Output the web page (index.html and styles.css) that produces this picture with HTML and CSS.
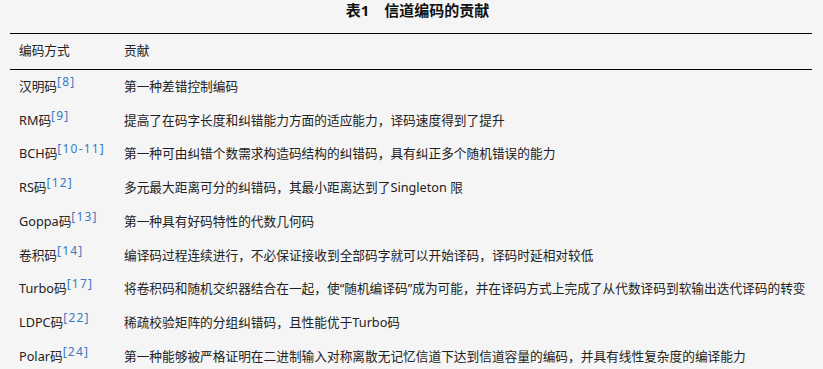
FILE: index.html
```html
<!DOCTYPE html>
<html lang="zh">
<head>
<meta charset="utf-8">
<link rel="stylesheet" href="styles.css">
</head>
<body>
<div class="page">
  <div class="title">表1　信道编码的贡献</div>
  <div class="table">
    <div class="row head"><div class="c1">编码方式</div><div class="c2">贡献</div></div>
    <div class="row"><div class="c1">汉明码<sup>[8]</sup></div><div class="c2">第一种差错控制编码</div></div>
    <div class="row"><div class="c1">RM码<sup>[9]</sup></div><div class="c2">提高了在码字长度和纠错能力方面的适应能力，译码速度得到了提升</div></div>
    <div class="row"><div class="c1">BCH码<sup>[10-11]</sup></div><div class="c2">第一种可由纠错个数需求构造码结构的纠错码，具有纠正多个随机错误的能力</div></div>
    <div class="row"><div class="c1">RS码<sup>[12]</sup></div><div class="c2">多元最大距离可分的纠错码，其最小距离达到了Singleton 限</div></div>
    <div class="row"><div class="c1">Goppa码<sup>[13]</sup></div><div class="c2">第一种具有好码特性的代数几何码</div></div>
    <div class="row"><div class="c1">卷积码<sup>[14]</sup></div><div class="c2">编译码过程连续进行，不必保证接收到全部码字就可以开始译码，译码时延相对较低</div></div>
    <div class="row"><div class="c1">Turbo码<sup>[17]</sup></div><div class="c2">将卷积码和随机交织器结合在一起，使“随机编译码”成为可能，并在译码方式上完成了从代数译码到软输出迭代译码的转变</div></div>
    <div class="row"><div class="c1">LDPC码<sup>[22]</sup></div><div class="c2">稀疏校验矩阵的分组纠错码，且性能优于Turbo码</div></div>
    <div class="row"><div class="c1">Polar码<sup>[24]</sup></div><div class="c2">第一种能够被严格证明在二进制输入对称离散无记忆信道下达到信道容量的编码，并具有线性复杂度的编译能力</div></div>
  </div>
</div>
</body>
</html>
```
FILE: styles.css
```css
html, body {
  margin: 0;
  padding: 0;
  background: #f5f5f5;
}
body {
  font-family: "Noto Sans", "Noto Sans CJK SC", sans-serif;
  color: #222;
  font-size: 12.7px;
}
.page {
  width: 823px;
  height: 369px;
  overflow: hidden;
  padding: 0 11px 0 10px;
  box-sizing: border-box;
}
.title {
  font-weight: bold;
  font-size: 15px;
  line-height: 20px;
  text-align: center;
  padding: 0 0 0 13px;
  height: 33px;
  color: #111;
}
.table {
  border-top: 1px solid #000;
}
.row {
  display: flex;
  padding: 8px 0;
  line-height: 17.75px;
  white-space: nowrap;
}
.row.head {
  padding: 8px 0 9px;
  border-bottom: 1px solid #000;
}
.c1 {
  width: 114px;
  padding-left: 9px;
  box-sizing: border-box;
  flex: none;
}
.c2 {
  flex: 1;
}
sup {
  font-size: 12px;
  letter-spacing: 1.2px;
  color: #3b78c2;
  vertical-align: 5px;
  line-height: 0;
}
```
